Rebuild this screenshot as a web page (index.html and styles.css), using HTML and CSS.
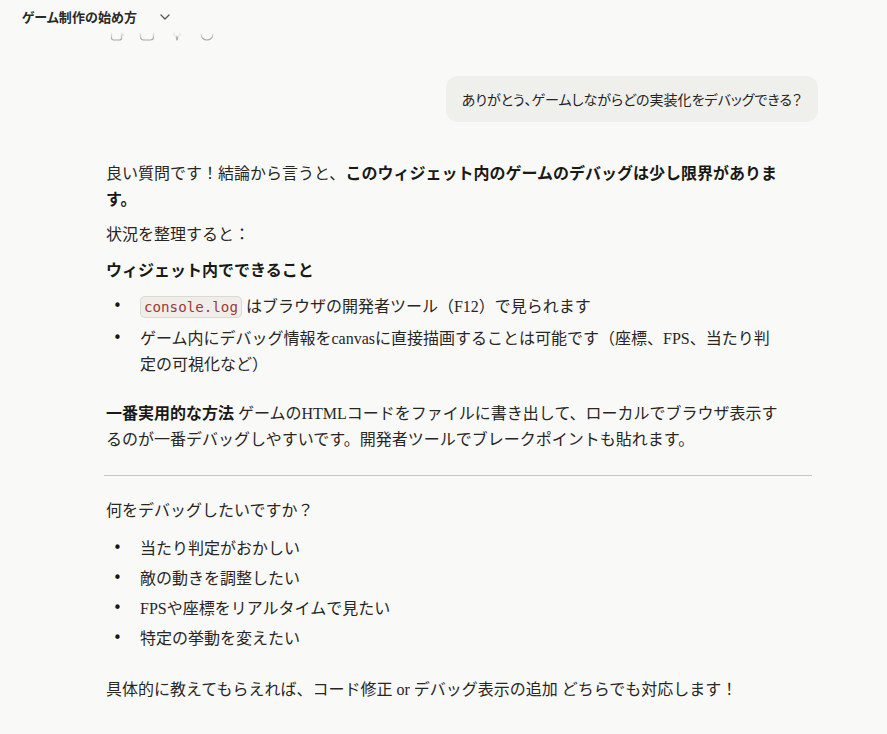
FILE: index.html
```html
<!DOCTYPE html>
<html lang="ja">
<head>
<meta charset="utf-8">
<title>ゲーム制作の始め方</title>
<link rel="stylesheet" href="styles.css">
</head>
<body>
<header class="topbar">
  <span class="title">ゲーム制作の始め方</span>
  <svg class="chev" width="12" height="12" viewBox="0 0 12 12"><path d="M2 4 L6 8 L10 4" fill="none" stroke="#555" stroke-width="1.3" stroke-linecap="round" stroke-linejoin="round"/></svg>
</header>
<main class="chat">
  <div class="actions">
    <svg width="16" height="16" viewBox="0 0 16 16"><rect x="2.5" y="4.5" width="10" height="10.5" rx="2" fill="none" stroke="#a9a79f" stroke-width="1.2"/><path d="M5 2.5 H12 a2 2 0 0 1 2 2 V11" fill="none" stroke="#a9a79f" stroke-width="1.2"/></svg>
    <svg width="16" height="16" viewBox="0 0 16 16"><rect x="1.5" y="2" width="13" height="13" rx="3" fill="none" stroke="#a9a79f" stroke-width="1.2"/></svg>
    <svg width="16" height="16" viewBox="0 0 16 16"><path d="M8 15 L7 11 M8 15 L9 11 M5 3 V10 M11 3 V10" fill="none" stroke="#a9a79f" stroke-width="1.2" stroke-linecap="round"/></svg>
    <svg width="16" height="16" viewBox="0 0 16 16"><path d="M2 9 A6 6 0 0 0 14 9" fill="none" stroke="#a9a79f" stroke-width="1.2" stroke-linecap="round"/></svg>
  </div>
  <div class="user-row">
    <div class="bubble">ありがとう、ゲームしながらどの実装化をデバッグできる？</div>
  </div>
  <article class="msg">
    <p>良い質問です！結論から言うと、<strong>このウィジェット内のゲームのデバッグは少し限界があります。</strong></p>
    <p>状況を整理すると：</p>
    <p><strong>ウィジェット内でできること</strong></p>
    <ul class="list list-a">
      <li><span><code>console.log</code> はブラウザの開発者ツール（F12）で見られます</span></li>
      <li><span>ゲーム内にデバッグ情報をcanvasに直接描画することは可能です（座標、FPS、当たり判定の可視化など）</span></li>
    </ul>
    <p class="after-list"><strong>一番実用的な方法</strong> ゲームのHTMLコードをファイルに書き出して、ローカルでブラウザ表示するのが一番デバッグしやすいです。開発者ツールでブレークポイントも貼れます。</p>
    <hr class="rule">
    <p>何をデバッグしたいですか？</p>
    <ul class="list list-b">
      <li><span>当たり判定がおかしい</span></li>
      <li><span>敵の動きを調整したい</span></li>
      <li><span>FPSや座標をリアルタイムで見たい</span></li>
      <li><span>特定の挙動を変えたい</span></li>
    </ul>
    <p class="after-list">具体的に教えてもらえれば、コード修正 or デバッグ表示の追加 どちらでも対応します！</p>
  </article>
</main>
</body>
</html>
```

FILE: styles.css
```css
html, body {
  margin: 0;
  padding: 0;
  background: #f9f9f7;
}
body {
  font-family: "Liberation Serif", "Noto Sans CJK JP", serif;
  color: #29261f;
  width: 887px;
  height: 734px;
  overflow: hidden;
}
p {
  margin: 0;
}
.topbar {
  position: relative;
  z-index: 2;
  height: 32px;
  display: flex;
  align-items: center;
  gap: 22px;
  padding-left: 22px;
  background: #f9f9f7;
}
.topbar::after {
  content: "";
  position: absolute;
  left: 0;
  right: 0;
  top: 32px;
  height: 7px;
  background: linear-gradient(#f9f9f7, rgba(249,249,247,0));
}
.title {
  font-family: "Noto Sans CJK JP", sans-serif;
  font-size: 13px;
  font-weight: 700;
  color: #2a2a28;
  font-feature-settings: "palt";
  letter-spacing: 0.1px;
}
.chev {
  display: block;
  margin-top: 1px;
}
.chat {
  margin-left: 104px;
  width: 714px;
  display: flex;
  flex-direction: column;
}
.actions {
  margin-top: -7px;
  height: 16px;
  display: flex;
  gap: 14px;
  padding-left: 5px;
  position: relative;
  z-index: 1;
}
.actions svg {
  display: block;
}
.user-row {
  display: flex;
  justify-content: flex-end;
  margin-top: 35px;
}
.bubble {
  background: #efefec;
  border-radius: 12px;
  padding: 12px 16px;
  line-height: 22px;
  font-family: "Noto Sans CJK JP", sans-serif;
  font-size: 14px;
  color: #24231f;
  font-feature-settings: "palt";
}
.msg {
  margin-top: 39px;
  padding: 0 33px 0 2px;
  font-size: 16px;
  line-height: 25.6px;
}
.msg > * + * {
  margin-top: 10px;
}
.msg strong {
  font-weight: 700;
  color: #1a1915;
}
.list {
  list-style: none;
  padding: 0;
  margin: 0;
}
.msg > .list-a {
  margin-top: 10.6px;
}
.msg > .list-b {
  margin-top: 12.4px;
}
.list li {
  display: grid;
  grid-template-columns: 34px 1fr;
}
.list li::before {
  content: "•";
  padding-left: 7px;
  font-family: "DejaVu Sans", sans-serif;
  font-size: 15px;
  color: #1a1915;
}
.list-a li + li {
  margin-top: 5.4px;
}
.list-b li + li {
  margin-top: 4.4px;
}
.msg > .after-list {
  margin-top: 24px;
}
.msg > .rule {
  margin: 22.6px -27px 0 -2px;
  border: 0;
  height: 1px;
  background: #c8c6bf;
}
.msg > .rule + p {
  margin-top: 22.2px;
}
.msg > .list-b + .after-list {
  margin-top: 25.4px;
}
code {
  font-family: "DejaVu Sans Mono", "Liberation Mono", monospace;
  font-size: 14.2px;
  color: #9c3a35;
  background: #f0eeea;
  border: 1px solid #dcd9d1;
  border-radius: 5px;
  padding: 2px 3px;
}
```
